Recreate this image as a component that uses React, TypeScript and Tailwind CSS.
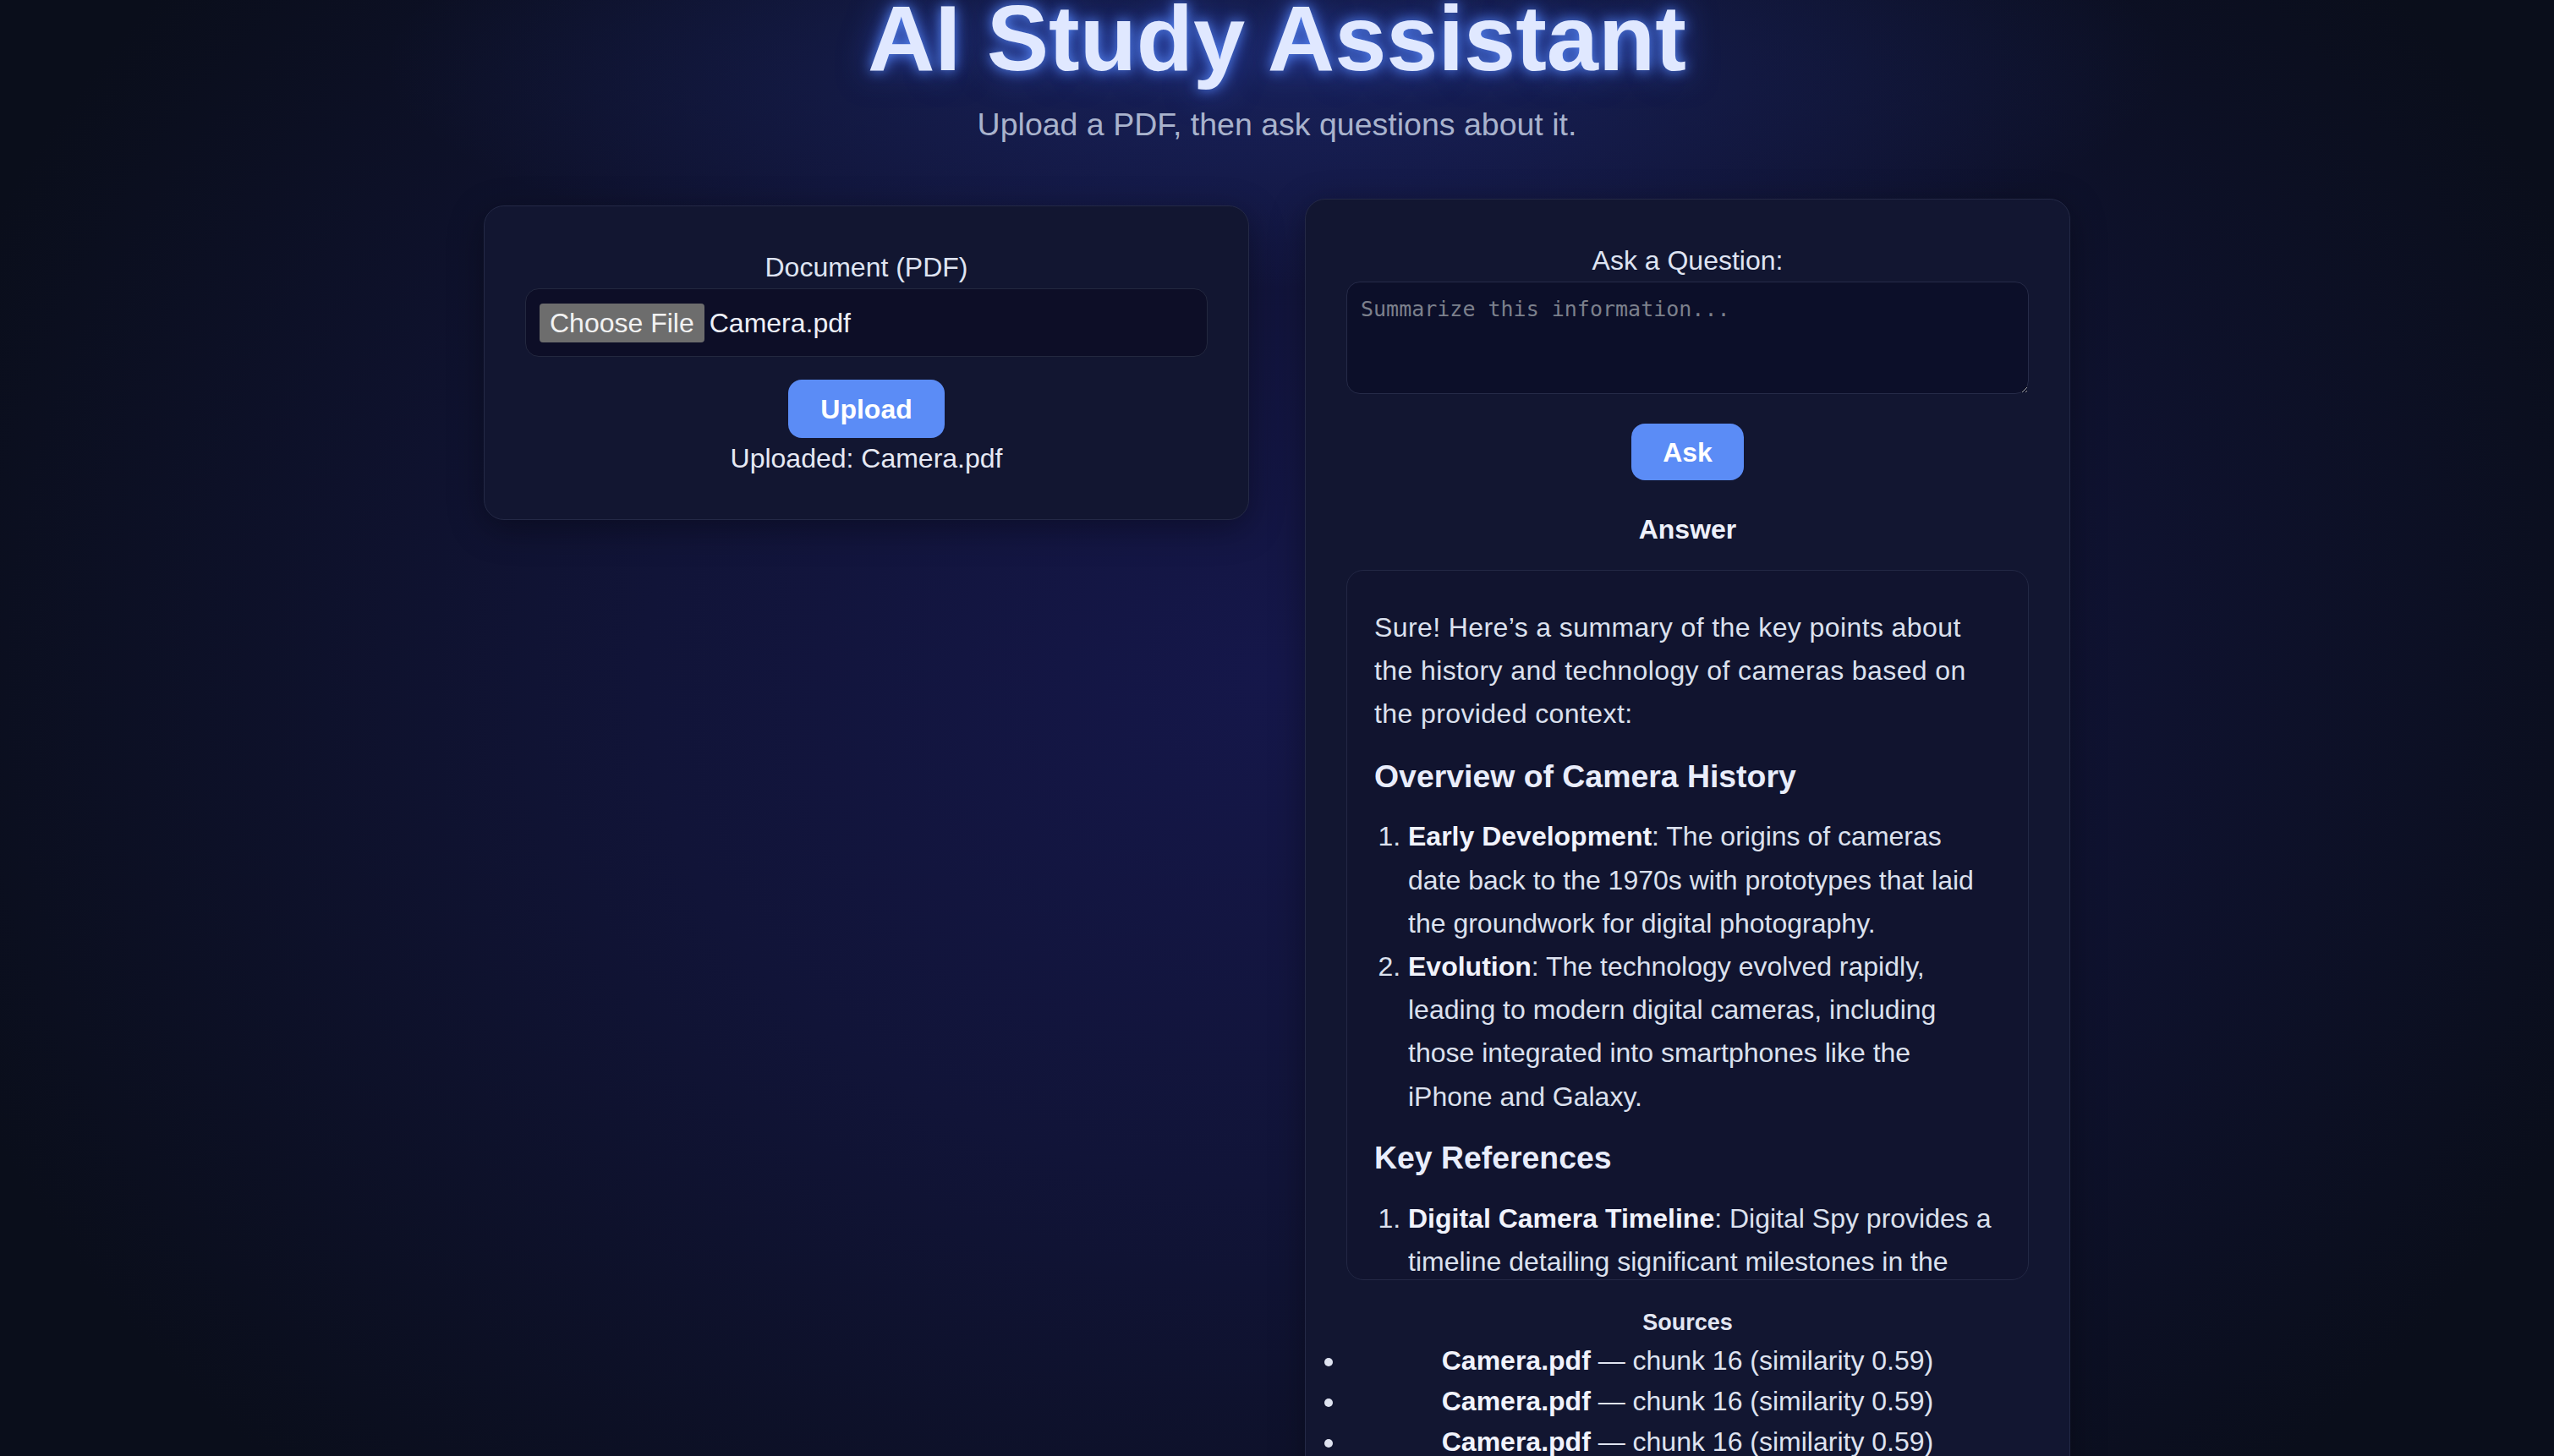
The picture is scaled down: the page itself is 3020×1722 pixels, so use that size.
import React from "react"

const sources = [
    {file: "Camera.pdf", chunk: 16, similarity: 0.59},
    {file: "Camera.pdf", chunk: 16, similarity: 0.59},
    {file: "Camera.pdf", chunk: 16, similarity: 0.59},
    {file: "Camera.pdf", chunk: 16, similarity: 0.59},
]

function UploadCard() {
    return (
        <section className="mt-[8px] rounded-[24px] border border-[#242946] bg-[#121631] p-[48px] text-center shadow-[0_10px_40px_rgba(0,0,0,0.35)]">
            <label className="block text-[32px] leading-[49px] text-[#dfe4f2]">Document (PDF)</label>
            <div className="flex h-[81px] items-center gap-[6px] rounded-[16px] border border-[#23283f] bg-[#0d0e27] px-[16px]">
                <span className="flex h-[46px] items-center rounded-[4px] bg-[#6d6d6d] px-[12px] text-[32px] text-[#f2f2f2]">
                    Choose File
                </span>
                <span className="text-[32px] text-[#eef0f8]">Camera.pdf</span>
            </div>
            <button className="mt-[27px] h-[69px] rounded-[16px] bg-[#5b8cf6] px-[38px] text-[32px] font-bold text-white">
                Upload
            </button>
            <p className="text-[32px] leading-[48px] text-[#e6e9f4]">Uploaded: Camera.pdf</p>
        </section>
    )
}

function AnswerBox() {
    return (
        <div className="mt-[24px] h-[840px] overflow-hidden rounded-[20px] border border-[#232845] bg-[#11142f] px-[32px] pt-[42px] text-left text-[32px] leading-[1.6] text-[#dce1ee]">
            <p className="tracking-[0.4px]">
                Sure! Here’s a summary of the key points about the history and technology of cameras based on the
                provided context:
            </p>
            <h3 className="mt-[18px] mb-[16px] text-[37.4px] font-bold text-[#e9edfb]">Overview of Camera History</h3>
            <ol className="list-decimal pl-[40px]">
                <li>
                    <strong className="text-[#f1f3fc]">Early Development</strong>: The origins of cameras date back to the
                    1970s with prototypes that laid the groundwork for digital photography.
                </li>
                <li>
                    <strong className="text-[#f1f3fc]">Evolution</strong>: The technology evolved rapidly, leading to modern
                    digital cameras, including those integrated into smartphones like the iPhone and Galaxy.
                </li>
            </ol>
            <h3 className="mt-[17px] mb-[16px] text-[37.4px] font-bold text-[#e9edfb]">Key References</h3>
            <ol className="list-decimal pl-[40px]">
                <li>
                    <strong className="text-[#f1f3fc]">Digital Camera Timeline</strong>: Digital Spy provides a timeline
                    detailing significant milestones in the development of digital cameras.
                </li>
            </ol>
        </div>
    )
}

function QuestionCard() {
    return (
        <section className="rounded-[24px] border border-[#242946] bg-[#121631] p-[48px] text-center shadow-[0_10px_40px_rgba(0,0,0,0.35)]">
            <label className="block text-[32px] leading-[49px] text-[#dfe4f2]">Ask a Question:</label>
            <textarea
                className="block h-[133px] w-full rounded-[16px] border border-[#262b48] bg-[#0c0f29] px-[16px] py-[16px] font-['DejaVu_Sans_Mono',monospace] text-[25px] leading-[32px] text-[#e6e9f4] outline-none placeholder:text-[#7c808c]"
                placeholder="Summarize this information..."
            />
            <button className="mt-[35px] h-[67px] rounded-[16px] bg-[#5b8cf6] px-[37px] text-[32px] font-bold text-white">
                Ask
            </button>
            <h2 className="mt-[34px] text-[32px] leading-[48px] font-bold text-[#eef1fb]">Answer</h2>
            <AnswerBox/>
            <h4 className="mt-[29px] text-[27px] leading-[42px] font-bold text-[#e3e7f3]">Sources</h4>
            <ul className="list-disc text-[32px] leading-[48px] text-[#dfe3f0]">
                {sources.map((s, i) => (
                    <li key={i} className="text-center">
                        <strong className="text-[#f1f3fc]">{s.file}</strong> — chunk {s.chunk} (similarity {s.similarity.toFixed(2)})
                    </li>
                ))}
            </ul>
        </section>
    )
}

export default function App() {
    return (
        <div className="relative min-h-screen overflow-hidden bg-[#0a0e1b] bg-[radial-gradient(ellipse_35%_14%_at_50%_4%,rgba(45,70,190,0.28),transparent),radial-gradient(ellipse_55%_70%_at_50%_42%,#15174a_0%,#111438_45%,#0a0e1b_100%)] font-['Liberation_Sans',Arial,sans-serif] text-[#e4e8f5]">
            <header className="-mt-[21px] text-center">
                <h1 className="text-[110px] leading-[132px] font-extrabold text-[#e0e8ff] [text-shadow:0_0_16px_rgba(90,140,255,1),0_0_40px_rgba(60,100,255,0.6)]">
                    AI Study Assistant
                </h1>
                <p className="mt-[14px] text-[37.5px] leading-[44px] text-[#a9b3cd]">
                    Upload a PDF, then ask questions about it.
                </p>
            </header>
            <main className="mx-auto mt-[66px] grid w-[1876px] grid-cols-2 items-start gap-[66px] pb-[80px]">
                <UploadCard/>
                <QuestionCard/>
            </main>
        </div>
    )
}
